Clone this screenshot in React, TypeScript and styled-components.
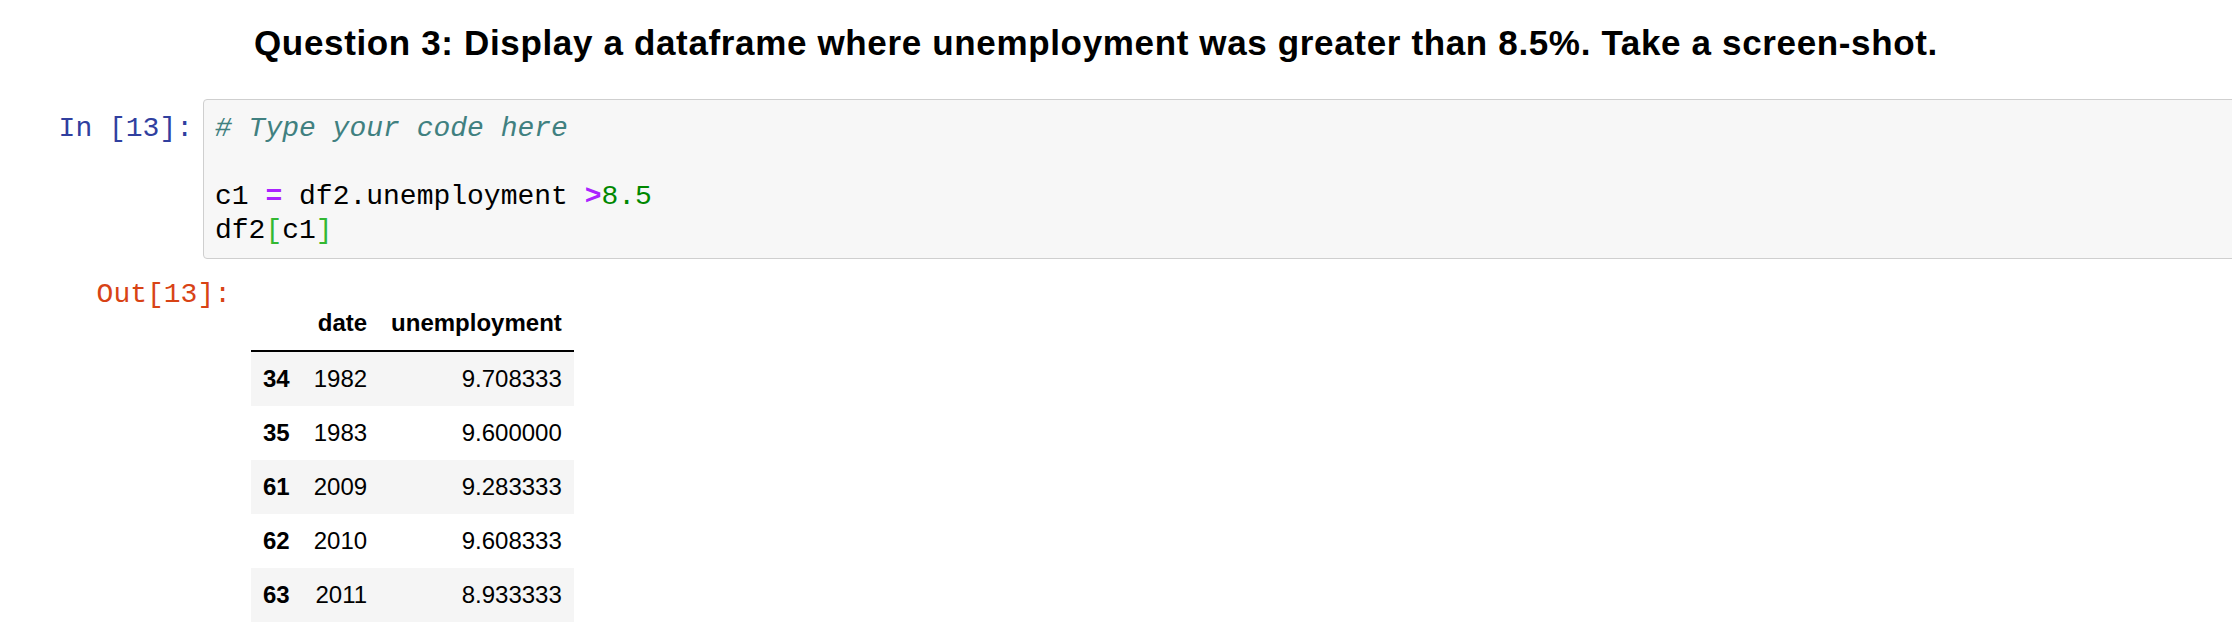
import styled, { createGlobalStyle } from "styled-components"

const GlobalStyle = createGlobalStyle`
  html, body {
    margin: 0;
    padding: 0;
    background: #fff;
    overflow: hidden;
  }
  body {
    font-family: "Liberation Sans", Arial, sans-serif;
    color: #000;
  }
`

const Notebook = styled.div`
  width: 2250px;
  display: flex;
  flex-direction: column;
`

const Cell = styled.div<{ $top: number }>`
  display: flex;
  align-items: flex-start;
  margin-top: ${(p) => p.$top}px;
`

const Prompt = styled.div<{ $width: number; $color?: string; $pad: number }>`
  flex: none;
  box-sizing: border-box;
  width: ${(p) => p.$width}px;
  padding-top: ${(p) => p.$pad}px;
  padding-right: ${(p) => (p.$width > 220 ? 20 : 10)}px;
  text-align: right;
  font-family: "Liberation Mono", "Courier New", monospace;
  font-size: 28px;
  line-height: 34px;
  color: ${(p) => p.$color || "#303F9F"};
  white-space: pre;
`

const Title = styled.h3`
  margin: 0;
  padding-left: 51px;
  font-size: 35px;
  letter-spacing: 0.65px;
  line-height: 40px;
  font-weight: bold;
`

const InputArea = styled.div`
  flex: 1;
  background: #f7f7f7;
  border: 1px solid #cfcfcf;
  border-radius: 4px;
  padding: 12px 0 10px 11px;
`

const CodeLine = styled.pre`
  margin: 0;
  height: 34px;
  font-family: "Liberation Mono", "Courier New", monospace;
  font-size: 28px;
  line-height: 34px;
  color: #000;
  white-space: pre;
`

const Comment = styled.span`
  color: #408080;
  font-style: italic;
`

const Op = styled.span`
  color: #aa22ff;
  font-weight: bold;
`

const Num = styled.span`
  color: #080;
`

const Bracket = styled.span`
  color: #33b833;
`

const Output = styled.div`
  padding-top: 30px;
`

const Frame = styled.table`
  border-collapse: separate;
  border-spacing: 0;
  font-size: 24px;
  line-height: 30px;
  color: #000;

  th, td {
    padding: 12px;
    text-align: right;
    vertical-align: middle;
  }
  th {
    font-weight: bold;
  }
  thead th {
    border-bottom: 2px solid #000;
  }
  tbody tr:nth-child(odd) {
    background: #f5f5f5;
  }
`

const rows = [
  { idx: 34, date: 1982, value: "9.708333" },
  { idx: 35, date: 1983, value: "9.600000" },
  { idx: 61, date: 2009, value: "9.283333" },
  { idx: 62, date: 2010, value: "9.608333" },
  { idx: 63, date: 2011, value: "8.933333" },
]

const App = () => {
  return (
    <>
      <GlobalStyle />
      <Notebook>
        <Cell $top={23}>
          <Prompt $width={203} $pad={0} />
          <Title>
            Question 3: Display a dataframe where unemployment was greater than 8.5%. Take a screen-shot.
          </Title>
        </Cell>

        <Cell $top={36}>
          <Prompt $width={203} $pad={13}>In [13]:</Prompt>
          <InputArea>
            <CodeLine>
              <Comment># Type your code here</Comment>
            </CodeLine>
            <CodeLine> </CodeLine>
            <CodeLine>
              c1 <Op>=</Op> df2.unemployment <Op>&gt;</Op>
              <Num>8.5</Num>
            </CodeLine>
            <CodeLine>
              df2<Bracket>[</Bracket>c1<Bracket>]</Bracket>
            </CodeLine>
          </InputArea>
        </Cell>

        <Cell $top={7}>
          <Prompt $width={251} $color="#D84315" $pad={12}>Out[13]:</Prompt>
          <Output>
            <Frame>
              <thead>
                <tr>
                  <th></th>
                  <th>date</th>
                  <th>unemployment</th>
                </tr>
              </thead>
              <tbody>
                {rows.map((r) => (
                  <tr key={r.idx}>
                    <th>{r.idx}</th>
                    <td>{r.date}</td>
                    <td>{r.value}</td>
                  </tr>
                ))}
              </tbody>
            </Frame>
          </Output>
        </Cell>
      </Notebook>
    </>
  )
}

export default App
